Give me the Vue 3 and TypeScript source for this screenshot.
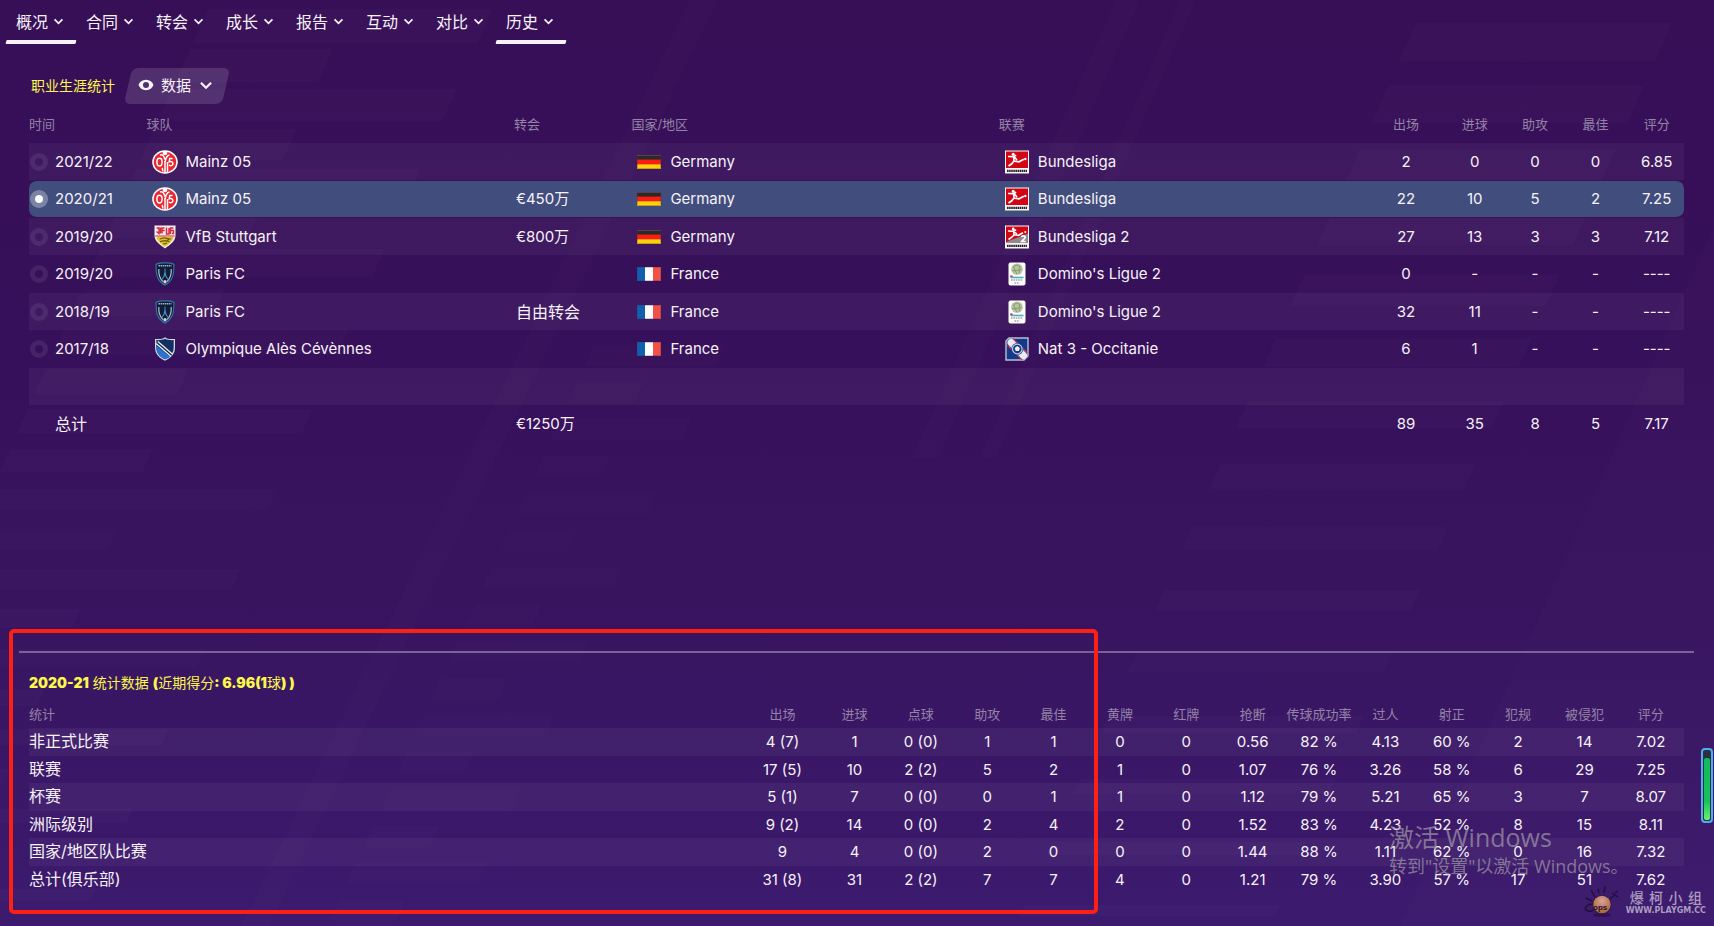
<script setup lang="ts">
import { ref } from 'vue'

interface Season {
  time: string
  crest: string
  team: string
  fee: string
  flag: string
  country: string
  badge: string
  league: string
  stats: string[]
}

const tabs = ['概况', '合同', '转会', '成长', '报告', '互动', '对比', '历史']
const activeTabs = ['概况', '历史']

const careerHeads = ['时间', '球队', '转会', '国家/地区', '联赛', '出场', '进球', '助攻', '最佳', '评分']
const seasons: Season[] = [
  { time: '2021/22', crest: 'mainz', team: 'Mainz 05', fee: '', flag: 'germany', country: 'Germany', badge: 'bundesliga', league: 'Bundesliga', stats: ['2', '0', '0', '0', '6.85'] },
  { time: '2020/21', crest: 'mainz', team: 'Mainz 05', fee: '€450万', flag: 'germany', country: 'Germany', badge: 'bundesliga', league: 'Bundesliga', stats: ['22', '10', '5', '2', '7.25'] },
  { time: '2019/20', crest: 'stuttgart', team: 'VfB Stuttgart', fee: '€800万', flag: 'germany', country: 'Germany', badge: 'bundesliga2', league: 'Bundesliga 2', stats: ['27', '13', '3', '3', '7.12'] },
  { time: '2019/20', crest: 'paris', team: 'Paris FC', fee: '', flag: 'france', country: 'France', badge: 'ligue2', league: "Domino's Ligue 2", stats: ['0', '-', '-', '-', '----'] },
  { time: '2018/19', crest: 'paris', team: 'Paris FC', fee: '自由转会', flag: 'france', country: 'France', badge: 'ligue2', league: "Domino's Ligue 2", stats: ['32', '11', '-', '-', '----'] },
  { time: '2017/18', crest: 'ales', team: 'Olympique Alès Cévènnes', fee: '', flag: 'france', country: 'France', badge: 'nat3', league: 'Nat 3 - Occitanie', stats: ['6', '1', '-', '-', '----'] },
]
const careerTotal = ['89', '35', '8', '5', '7.17']
const selected = ref(1)

const statHeads = ['统计', '出场', '进球', '点球', '助攻', '最佳', '黄牌', '红牌', '抢断', '传球成功率', '过人', '射正', '犯规', '被侵犯', '评分']
const statRows: string[][] = [
  ['非正式比赛', '4 (7)', '1', '0 (0)', '1', '1', '0', '0', '0.56', '82 %', '4.13', '60 %', '2', '14', '7.02'],
  ['联赛', '17 (5)', '10', '2 (2)', '5', '2', '1', '0', '1.07', '76 %', '3.26', '58 %', '6', '29', '7.25'],
  ['杯赛', '5 (1)', '7', '0 (0)', '0', '1', '1', '0', '1.12', '79 %', '5.21', '65 %', '3', '7', '8.07'],
  ['洲际级别', '9 (2)', '14', '0 (0)', '2', '4', '2', '0', '1.52', '83 %', '4.23', '52 %', '8', '15', '8.11'],
  ['国家/地区队比赛', '9', '4', '0 (0)', '2', '0', '0', '0', '1.44', '88 %', '1.11', '62 %', '0', '16', '7.32'],
  ['总计(俱乐部)', '31 (8)', '31', '2 (2)', '7', '7', '4', '0', '1.21', '79 %', '3.90', '57 %', '17', '51', '7.62'],
]

// Slanted bars that repeat down the backdrop, drifting left as they go.
function slab(x: number, y: number, w: number, h: number): string {
  const s = h * 0.45
  return `${x},${y} ${x + w},${y} ${x + w - s},${y + h} ${x - s},${y + h}`
}
const slabs: string[] = []
for (let i = 0; i < 15; i++) slabs.push(slab(1416 - i * 28, 23 + i * 63, 256, 39 - i * 2))
for (let i = 0; i < 23; i++) slabs.push(slab(208 - i * 18, 9 + i * 40, i % 2 ? 143 : 285, Math.max(12, 34 - i)))
const faintSlabs: string[] = []
for (let i = 0; i < 16; i++) faintSlabs.push(slab(594 - i * 17, 345 + i * 37, i % 2 ? 67 : 131, 21))
</script>

<template>
  <div class="screen">
    <svg class="backdrop" viewBox="0 0 1714 926" preserveAspectRatio="none" aria-hidden="true">
      <g fill="#ffffff" fill-opacity="0.016">
        <polygon v-for="(p, i) in slabs" :key="i" :points="p" />
      </g>
      <g fill="#ffffff" fill-opacity="0.01">
        <polygon v-for="(p, i) in faintSlabs" :key="i" :points="p" />
        <polygon points="690,0 718,0 269,926 241,926" />
        <polygon points="1116,0 1140,0 938,458 912,458" />
        <polygon points="1180,0 1196,0 996,458 980,458" />
        <polygon points="1714,227 1714,926 1400,926" />
      </g>
    </svg>

    <svg class="symbols" aria-hidden="true">
      <symbol id="mainz" viewBox="0 0 26 24">
        <ellipse cx="13" cy="12" rx="12.8" ry="11.8" fill="#fff" />
        <ellipse cx="13" cy="12" rx="11.2" ry="10.3" fill="#ea2630" />
        <g fill="none" stroke="#fff" stroke-width="1.500">
          <path d="M13 23V11M15.500 22V12" />
          <path d="M7.500 8.200c2 0 2.600 1.700 2.600 3.700s-.8 4-2.600 4-2.600-2-2.600-4 .8-3.700 2.600-3.700zM8 5C10.500 4 12 6 13 9.500M17.500 5C15 5.500 13.700 8 13.200 12M20.700 8.500h-3l-.5 3.300c2-.8 4 .2 3.700 2.100s-2.300 2.300-4 1.300" />
          <path d="M10 18c.8 1 .8 2 .8 3.500" />
        </g>
        <circle cx="13" cy="3" r="2.300" fill="#fff" />
      </symbol>
      <symbol id="stuttgart" viewBox="0 0 26 24">
        <path d="M2.500.5h21v10c0 6-5.500 9-10.500 13C8 19.500 2.500 16.500 2.500 10.500z" fill="#f5eef0" />
        <path d="M4.500 12h17c-.6 4-4.500 6.800-8.500 10C9 18.800 5.100 16 4.500 12z" fill="#e0c41d" />
        <path d="M4.500 3H7v5.500L4.500 6.500M8.500 2.500v6M10 8.500V3h2.500M10.500 5.500h2.200M14.500 2.500V9h2.500V3M18.500 9V3h3M18.500 5.500h3v3H20" fill="none" stroke="#d4283c" stroke-width="1.400" />
        <path d="M3.300 11h19.400" stroke="#d4283c" />
        <path d="M8 14l4-1.200 6 1.200-3 1.300M8 16.700l5-1 4.500 1M11 19l4-.8" fill="none" stroke="#6c5a13" stroke-width="1.200" />
      </symbol>
      <symbol id="paris" viewBox="0 0 26 24">
        <path d="M13 .3c4 0 7 .4 9.600 1.600C22 9 23.500 18 13 23.700C2.500 18 4 9 3.400 1.900C6 .7 9 .3 13 .3z" fill="#2f75a6" />
        <path d="M13 1.500c3.500 0 6 .3 8.400 1.200C21 10 22 17 13 22.300C4 17 5 10 4.600 2.700C7 1.800 9.500 1.500 13 1.500z" fill="#101c38" />
        <path d="M6.500 3.800h13" stroke="#a5b6c7" stroke-width="1.600" stroke-dasharray="1.500 .6" />
        <path d="M6.800 7c-.3 5 .5 9 4 12.500M19.200 7c.3 5-.5 9-4 12.500" fill="none" stroke="#b4bfcb" stroke-width="1.200" />
        <path d="M13 6.500v5M13 10l-1 4-2 3.500M13 10l1 4 2 3.500M11.500 14h3" fill="none" stroke="#4589bb" stroke-width="1.100" />
        <circle cx="13" cy="19.800" r="1.700" fill="#d8d3dc" />
      </symbol>
      <symbol id="ales" viewBox="0 0 26 24">
        <path d="M13 .3l2 1.200c2.500.8 5.500.6 8 .4V10c0 7-3.500 10.500-10 13.700C6.500 20.500 3 17 3 10V1.900c2.500.2 5.500.4 8-.4z" fill="#c9dbe9" />
        <path d="M13 1.800c2.500 1.300 5.500 1.400 8.700 1.300V10c0 6-3 9.500-8.700 12.300C7.300 19.500 4.300 16 4.300 10V3.100C7.500 3.200 10.500 3.100 13 1.800z" fill="#123060" />
        <path d="M4.300 8.500l14 11.300c-1.500 1.100-3.300 1.900-5.300 2.500C7.300 19.500 4.400 16 4.300 8.500z" fill="#2d72d2" />
        <path d="M5 5.500l14.800 12.700" stroke="#eef3f8" stroke-width="3.800" />
        <path d="M5 5.500l14.800 12.700" stroke="#14223f" stroke-width="1.300" />
      </symbol>
      <symbol id="germany" viewBox="0 0 24 14">
        <path d="M0 0h24v5H0z" fill="#2b2a2b" /><path d="M0 0h24v1H0z" fill="#55504e" />
        <path d="M0 4.600h24v5H0z" fill="#fb1c12" /><path d="M0 9.300h24V14H0z" fill="#fcd20a" />
        <path d="M.5.500h23v13H.5z" fill="none" stroke="#5d2434" stroke-opacity=".3" />
      </symbol>
      <symbol id="france" viewBox="0 0 24 14">
        <path d="M0 0h8v14H0z" fill="#1160ad" /><path d="M8 0h8v14H8z" fill="#fff" /><path d="M16 0h8v14h-8z" fill="#f15146" />
        <path d="M.5.500h23v13H.5z" fill="none" stroke="#43225c" stroke-opacity=".25" />
      </symbol>
      <symbol id="bundesliga" viewBox="0 0 24 24">
        <path d="M0 .5h24v23H0z" fill="#fbf6f6" /><path d="M1 1.500h22V18H1z" fill="#d20515" />
        <circle cx="8.200" cy="4.200" r="1.500" fill="#fff" />
        <path d="M3 6.500l5 .2 3.200-1.500M8.600 6.500l.4 4.500 5 .8 4.800-2.500M9 11l-2.500 3-3 2M9.500 7l2.500 3" fill="none" stroke="#fff" stroke-width="1.700" />
        <circle cx="20.300" cy="9" r="1.200" fill="#fff" />
        <path d="M2 20.800h20" stroke="#272227" stroke-width="2.200" stroke-dasharray="1.600 .5" />
      </symbol>
      <symbol id="bundesliga2" viewBox="0 0 24 24">
        <path d="M0 .5h24v23H0z" fill="#fbf6f6" /><path d="M1 1.500h22V18H1z" fill="#d20515" />
        <path d="M23 8.500V18H1v-1z" fill="#8c8b8d" />
        <circle cx="8.200" cy="4" r="1.400" fill="#fff" />
        <path d="M3 6l5 .2 3.200-1.400M8.600 6.200l.4 3.500 4.500.6 4.500-2.600M9 10l-2.500 2.500-3 2M9.500 7l2.500 2" fill="none" stroke="#fff" stroke-width="1.600" />
        <circle cx="20.300" cy="7" r="1.100" fill="#fff" />
        <path d="M16.500 12c.5-1.800 4-1.500 3.700.4-.2 1.500-2.500 2.500-3.500 4.100h4" fill="none" stroke="#fff" stroke-width="1.700" />
        <path d="M2 20.800h20" stroke="#272227" stroke-width="2.200" stroke-dasharray="1.600 .5" />
      </symbol>
      <symbol id="ligue2" viewBox="0 0 24 24">
        <rect x="3.500" y=".5" width="17" height="23" rx="2" fill="#fbfcfa" />
        <circle cx="12" cy="7.200" r="5.800" fill="#b9c5a0" />
        <path d="M8.500 5l3-2 3.500 1.500-.8 3.500-4 .5zM7 8.500l3.500.5 1.200 3M16.500 7l-2 1.500-.5 3" fill="none" stroke="#7f9669" stroke-width=".9" />
        <path d="M5.500 15.500h13" stroke="#54a8cf" stroke-width="1.600" /><path d="M5.200 14.200h2.500" stroke="#d2354a" stroke-width="1.500" />
        <path d="M6 18h12M9.500 21h5" stroke="#a3a8a6" stroke-width="1.300" stroke-dasharray="1.600 .8" />
      </symbol>
      <symbol id="nat3" viewBox="0 0 24 24">
        <path d="M4 1h19v18l-4 4H1V4z" fill="#12398a" stroke="#b9bfd4" stroke-width="1.400" />
        <path d="M2 8l15 14.500M8 1.700L22.300 16" stroke="#d03145" stroke-width="1.400" />
        <path d="M6 5.500l12.500 13" stroke="#e8ebf4" stroke-width="7" stroke-linecap="round" />
        <circle cx="12.300" cy="12" r="6" fill="#12398a" /><circle cx="12.300" cy="12" r="4.800" fill="#12398a" stroke="#c5cde3" stroke-width="1.200" />
        <path d="M12.300 9l2.600 1.900-1 3h-3.200l-1-3z" fill="#f3f4f8" />
      </symbol>
      <symbol id="chevron" viewBox="0 0 12 8">
        <path d="M1.500 1.500L6 6l4.500-4.500" fill="none" stroke="currentColor" stroke-width="2" />
      </symbol>
    </svg>

    <nav class="tabs" aria-label="球员">
      <button v-for="t in tabs" :key="t" type="button" class="tab" :class="{ active: activeTabs.includes(t) }">
        <span>{{ t }}</span>
        <svg class="tab-arrow"><use href="#chevron" /></svg>
      </button>
    </nav>

    <section class="career">
      <div class="career-head">
        <h2 class="title">职业生涯统计</h2>
        <label class="view">
          <svg class="eye" viewBox="0 0 16 12">
            <path d="M8 .8C4.200.8 1.600 3 .5 6c1.100 3 3.700 5.200 7.500 5.200S14.400 9 15.500 6C14.400 3 11.800.8 8 .8zM8 3a3 3 0 1 1 0 6 3 3 0 0 1 0-6z" fill="currentColor" fill-rule="evenodd" />
          </svg>
          <select class="view-select" aria-label="视图"><option>数据</option></select>
          <svg class="view-arrow"><use href="#chevron" /></svg>
        </label>
      </div>

      <table class="career-table">
        <colgroup>
          <col class="c-time"><col class="c-name"><col class="c-time"><col class="c-name"><col>
          <col class="c-apps"><col class="c-goals"><col class="c-assists"><col class="c-goals"><col class="c-rating">
        </colgroup>
        <thead>
          <tr><th v-for="(h, i) in careerHeads" :key="h" scope="col" :class="{ num: i > 4 }">{{ h }}</th></tr>
        </thead>
        <tbody>
          <tr v-for="(s, i) in seasons" :key="i" :class="{ picked: selected === i }">
            <td>
              <label class="pick">
                <input v-model="selected" type="radio" name="season" :value="i">
                <span>{{ s.time }}</span>
              </label>
            </td>
            <td><div class="entity team"><svg class="crest"><use :href="'#' + s.crest" /></svg>{{ s.team }}</div></td>
            <td class="fee" :class="{ word: !s.fee.startsWith('€') }">{{ s.fee }}</td>
            <td><div class="entity"><svg class="flag"><use :href="'#' + s.flag" /></svg>{{ s.country }}</div></td>
            <td><div class="entity"><svg class="badge"><use :href="'#' + s.badge" /></svg>{{ s.league }}</div></td>
            <td v-for="(v, k) in s.stats" :key="k" class="num">{{ v }}</td>
          </tr>
          <tr><td colspan="10"></td></tr>
          <tr>
            <td class="total word">总计</td><td></td><td class="fee">€1250万</td><td></td><td></td>
            <td v-for="(v, k) in careerTotal" :key="k" class="num">{{ v }}</td>
          </tr>
        </tbody>
      </table>
    </section>

    <section class="season">
      <h2 class="title season-title"><b>2020-21</b> 统计数据 <b>(</b>近期得分<b>:&nbsp;6.96(1</b>球<b>) )</b></h2>
      <table class="season-table">
        <colgroup><col><col class="s-apps"><col v-for="n in 13" :key="n" class="s-num"></colgroup>
        <thead>
          <tr><th v-for="(h, i) in statHeads" :key="h" scope="col" :class="{ num: i > 0 }">{{ h }}</th></tr>
        </thead>
        <tbody>
          <tr v-for="r in statRows" :key="r[0]">
            <th scope="row">{{ r[0] }}</th>
            <td v-for="(v, k) in r.slice(1)" :key="k" class="num">{{ v }}</td>
          </tr>
        </tbody>
      </table>
      <div class="highlight"></div>
    </section>

    <div class="activation">
      <div class="activation-title">激活 Windows</div>
      <div>转到"设置"以激活 Windows。</div>
    </div>

    <div class="gauge"><div class="gauge-fill"></div></div>

    <div class="brand">
      <svg class="bomb" viewBox="0 0 36 32">
        <ellipse cx="18" cy="29" rx="9" ry="2" fill="#220c42" opacity=".6" />
        <g fill="none" stroke="#20103c" stroke-width="1.500">
          <path d="M2 12l6 3M7 4l4 7M21 0l-1 7M14 3l1 4M26 13l5-4M28 7l6 4M31 7l3-2" />
          <path d="M9 18C3 18 0 22 2 24s6 1 8 0" />
        </g>
        <circle cx="18" cy="18.500" r="9.500" fill="#2c1546" />
        <circle cx="18" cy="18.500" r="8.700" fill="url(#glow)" />
        <defs>
          <radialGradient id="glow" cx=".5" cy=".3" r=".75">
            <stop offset="0" stop-color="#d6a3a5" /><stop offset=".5" stop-color="#c07f5c" /><stop offset="1" stop-color="#a8642f" />
          </radialGradient>
        </defs>
        <text x="9" y="24" class="bomb-text">ops</text>
      </svg>
      <div class="brand-text">
        <div class="brand-name"><span>爆</span><span>柯</span><span>小</span><span>组</span></div>
        <div class="brand-url">WWW.PLAYGM.CC</div>
      </div>
    </div>
  </div>
</template>

<style>
body {
  margin: 0;
  background: #381059;
}
</style>

<style scoped>
.screen {
  position: relative;
  display: flex;
  flex-direction: column;
  box-sizing: border-box;
  min-height: 100vh;
  overflow: hidden;
  background: linear-gradient(#370f57, #37105b 40%, #38145f 65%, #3c1a6e);
  color: #f6f2f8;
  font: 15px/20px Inter, "Noto Sans CJK SC", sans-serif;
}
.backdrop {
  position: absolute;
  inset: 0;
  width: 100%;
  height: 100%;
}
.symbols {
  position: absolute;
  width: 0;
  height: 0;
}
.tabs {
  position: relative;
  display: flex;
  padding-left: 6px;
}
.tab {
  position: relative;
  display: flex;
  align-items: center;
  gap: 5px;
  width: 70px;
  height: 44px;
  padding: 0 0 2px 10px;
  border: 0;
  background: none;
  color: inherit;
  font: 16px/20px "Noto Sans CJK SC", sans-serif;
  cursor: pointer;
}
.tab.active::after {
  content: "";
  position: absolute;
  left: 0;
  right: 0;
  bottom: 0;
  height: 4px;
  border-radius: 1px;
  background: #f6f3f8;
  transform: skewX(-14deg);
}
.tab-arrow {
  width: 11px;
  height: 7px;
}
.career {
  position: relative;
  flex: 1;
  padding: 24px 30px 0 29px;
}
.career-head {
  display: flex;
  align-items: center;
  gap: 8px;
  padding-left: 2px;
}
.title {
  margin: 0;
  color: #fcf84a;
  font: 14px/20px Inter, "Noto Sans CJK SC", sans-serif;
}
.title b {
  font-weight: 900;
}
.view {
  position: relative;
  display: flex;
  align-items: center;
  gap: 7px;
  box-sizing: border-box;
  height: 36px;
  padding: 0 18px 2px 15px;
}
.view::before {
  content: "";
  position: absolute;
  inset: 0 5px;
  border-radius: 6px;
  background: #ffffff22;
  transform: skewX(-13deg);
}
.view > * {
  position: relative;
}
.eye {
  width: 16px;
  height: 12px;
}
.view-select {
  appearance: none;
  padding: 0;
  border: 0;
  background: none;
  color: inherit;
  font: 15px/20px "Noto Sans CJK SC", sans-serif;
}
.view-arrow {
  width: 14px;
  height: 9px;
}
table {
  width: 100%;
  border-collapse: separate;
  border-spacing: 0;
  table-layout: fixed;
}
th,
td {
  padding: 0;
  text-align: left;
  white-space: nowrap;
}
thead th {
  color: #9483a6;
  font-size: 13px;
  font-weight: 400;
}
.num {
  text-align: center;
}
.career-table thead th {
  height: 39px;
}
.c-time { width: 7.1%; }
.c-name { width: 22.2%; }
.c-apps { width: 4.2%; }
.c-goals { width: 4.1%; }
.c-assists { width: 3.2%; }
.c-rating { width: 3.3%; }
.career-table tbody tr { height: 37px; }
.career-table tbody tr:nth-child(even) { height: 38px; }
tbody tr:nth-child(odd) > * {
  background: #ffffff0b;
}
.career-table tbody .picked td {
  border: 1px solid transparent;
  border-width: 1px 0;
  background: #414d7d;
  background-clip: padding-box;
}
.picked td:first-child { border-radius: 8px 0 0 8px; }
.picked td:last-child { border-radius: 0 8px 8px 0; }
.pick {
  display: flex;
  align-items: center;
  gap: 7px;
  padding-left: 1px;
}
.pick input {
  appearance: none;
  width: 18px;
  height: 18px;
  margin: 0;
  border: 5px solid #ffffff14;
  border-radius: 50%;
}
.pick input:checked {
  border-color: #ffffff50;
  background: #fff;
  background-clip: padding-box;
}
.entity {
  display: flex;
  align-items: center;
  gap: 9px;
  padding-left: 6px;
}
.team {
  gap: 8px;
  padding-left: 5px;
}
.crest {
  width: 26px;
  height: 24px;
}
.flag {
  width: 24px;
  height: 14px;
}
.badge {
  width: 24px;
  height: 24px;
}
.fee {
  padding-left: 2px;
}
.total {
  padding-left: 26px;
}
.word {
  font-size: 16px;
}
.season {
  position: relative;
  margin: 0 20px 0 19px;
  padding: 20px 10px 33px;
  border-top: 2px solid #7d6199;
}
.season-title {
  margin-bottom: 9px;
}
.season-table thead th {
  height: 23px;
  padding-bottom: 3px;
}
.s-apps { width: 4.7%; }
.s-num { width: 4.01%; }
.season-table tbody th {
  padding-bottom: 2px;
  font-size: 16px;
  font-weight: 400;
}
.season-table tbody tr { height: 27px; }
.season-table tbody tr:nth-child(odd) { height: 28px; }
.highlight {
  position: absolute;
  top: -24px;
  bottom: 12px;
  left: -10px;
  box-sizing: border-box;
  width: 65%;
  border: 4px solid #ff2015;
  border-radius: 5px;
  pointer-events: none;
}
.activation {
  position: absolute;
  right: 85px;
  bottom: 47px;
  width: 240px;
  color: #a39ba8b4;
  font: 18px/26px "Open Sans", "Noto Sans CJK SC", sans-serif;
  white-space: nowrap;
  pointer-events: none;
}
.activation-title {
  font-size: 25px;
  line-height: 32px;
}
.gauge {
  position: absolute;
  right: 1px;
  bottom: 103px;
  box-sizing: border-box;
  width: 12px;
  height: 75px;
  padding: 8px 1px 1px;
  border: 2px solid #4aaef0;
  border-radius: 4px;
  background: #2a3040;
}
.gauge-fill {
  height: 100%;
  border-radius: 2px;
  background: linear-gradient(#14b85c, #18c25a 70%, #6cf070);
}
.brand {
  position: absolute;
  right: 8px;
  bottom: 8px;
  display: flex;
  align-items: center;
  gap: 6px;
  color: #ab9cc0;
}
.bomb {
  width: 36px;
  height: 32px;
}
.bomb-text {
  fill: #1d1038;
  font: bold 8px "Liberation Sans", sans-serif;
}
.brand-name {
  display: flex;
  justify-content: space-between;
  padding: 0 4px;
  font: 500 14px/17px "Noto Sans CJK SC", sans-serif;
}
.brand-url {
  font: bold 8px/9px "DejaVu Sans", sans-serif;
}
</style>
